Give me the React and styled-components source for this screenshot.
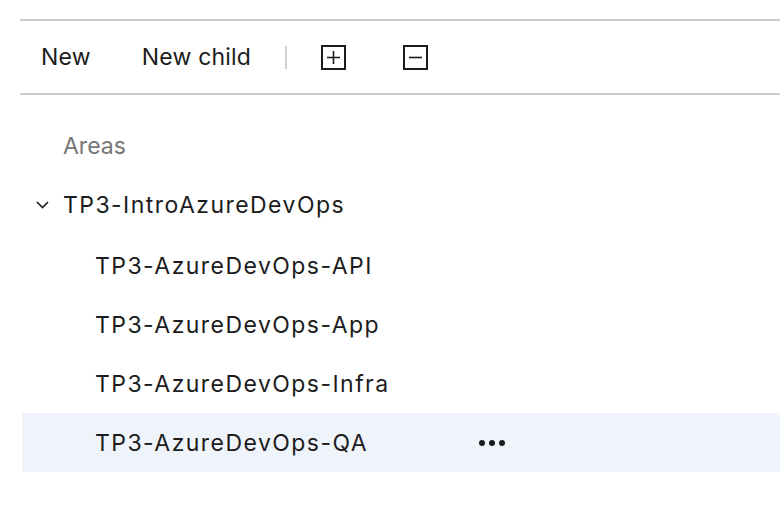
import React from 'react'
import styled, {createGlobalStyle} from 'styled-components'

const Global = createGlobalStyle`
  html, body {
    margin: 0;
    padding: 0;
    background: #fff;
  }
  body {
    font-family: Inter, "Noto Sans", "Liberation Sans", sans-serif;
    color: #1c1c1c;
    -webkit-font-smoothing: antialiased;
  }
`

const Page = styled.div`
  width: 780px;
  height: 510px;
  padding: 19px 0 0 20px;
  box-sizing: border-box;
  overflow: hidden;
`

const Toolbar = styled.div`
  display: flex;
  align-items: center;
  height: 72px;
  border-top: 2px solid #cdcdcd;
  border-bottom: 2px solid #cdcdcd;
  padding-left: 21px;
`

const ToolButton = styled.button`
  background: none;
  border: none;
  padding: 0;
  margin-right: ${p => p.$gap || 0}px;
  font: inherit;
  font-size: 23px;
  letter-spacing: 0.2px;
  color: #1c1c1c;
  cursor: pointer;
`

const Divider = styled.div`
  width: 2px;
  height: 23px;
  background: #d0d0d0;
  margin: 0 34px 0 0;
`

const IconButton = styled.button`
  display: flex;
  align-items: center;
  justify-content: center;
  width: 25px;
  height: 25px;
  padding: 0;
  border: none;
  background: none;
  margin-right: ${p => p.$gap || 0}px;
  cursor: pointer;
`

const Tree = styled.div`
  display: flex;
  flex-direction: column;
  padding-top: 22px;
`

const Header = styled.div`
  height: 58px;
  display: flex;
  align-items: center;
  padding-left: 43px;
  font-size: 23px;
  color: #767676;
`

const Group = styled.div`
  display: flex;
  flex-direction: column;
  margin-top: ${p => p.$gap || 0}px;
`

const Row = styled.div`
  height: 59px;
  display: flex;
  align-items: center;
  margin-left: 2px;
  padding-left: ${p => 41 + p.$level * 32}px;
  position: relative;
  font-size: 23px;
  letter-spacing: 1.45px;
  background: ${p => (p.$selected ? '#eff4fb' : 'transparent')};
`

const Chevron = styled.span`
  position: absolute;
  left: 14px;
  top: 50%;
  transform: translateY(-50%);
  display: flex;
`

const Label = styled.span`
  white-space: nowrap;
`

const More = styled.span`
  position: absolute;
  left: 456px;
  top: 50%;
  transform: translateY(-50%);
  display: flex;
`

const children = [
  'TP3-AzureDevOps-API',
  'TP3-AzureDevOps-App',
  'TP3-AzureDevOps-Infra',
  'TP3-AzureDevOps-QA'
]

export default function App() {
  return (
    <Page>
      <Global />
      <Toolbar>
        <ToolButton $gap={51}>New</ToolButton>
        <ToolButton $gap={34}>New child</ToolButton>
        <Divider />
        <IconButton $gap={57} aria-label='Expand all'>
          <svg width='25' height='25' viewBox='0 0 25 25'>
            <rect x='1' y='1' width='23' height='23' fill='none' stroke='#1c1c1c' strokeWidth='2' />
            <path d='M12.5 6v13M6 12.5h13' stroke='#1c1c1c' strokeWidth='1.6' />
          </svg>
        </IconButton>
        <IconButton aria-label='Collapse all'>
          <svg width='25' height='25' viewBox='0 0 25 25'>
            <rect x='1' y='1' width='23' height='23' fill='none' stroke='#1c1c1c' strokeWidth='2' />
            <path d='M6 12.5h13' stroke='#1c1c1c' strokeWidth='1.6' />
          </svg>
        </IconButton>
      </Toolbar>

      <Tree>
        <Header>Areas</Header>
        <Row $level={0}>
          <Chevron>
            <svg width='13' height='9' viewBox='0 0 13 9'>
              <path d='M1 1.5l5.5 5.5 5.5-5.5' fill='none' stroke='#1c1c1c' strokeWidth='1.6' />
            </svg>
          </Chevron>
          <Label>TP3-IntroAzureDevOps</Label>
        </Row>
        <Group $gap={2}>
          {children.map((name, i) => {
            const selected = i === children.length - 1
            return (
              <Row key={name} $level={1} $selected={selected}>
                <Label>{name}</Label>
                {selected && (
                  <More>
                    <svg width='28' height='8' viewBox='0 0 28 8'>
                      <circle cx='4' cy='4' r='3' fill='#1c1c1c' />
                      <circle cx='14' cy='4' r='3' fill='#1c1c1c' />
                      <circle cx='24' cy='4' r='3' fill='#1c1c1c' />
                    </svg>
                  </More>
                )}
              </Row>
            )
          })}
        </Group>
      </Tree>
    </Page>
  )
}
